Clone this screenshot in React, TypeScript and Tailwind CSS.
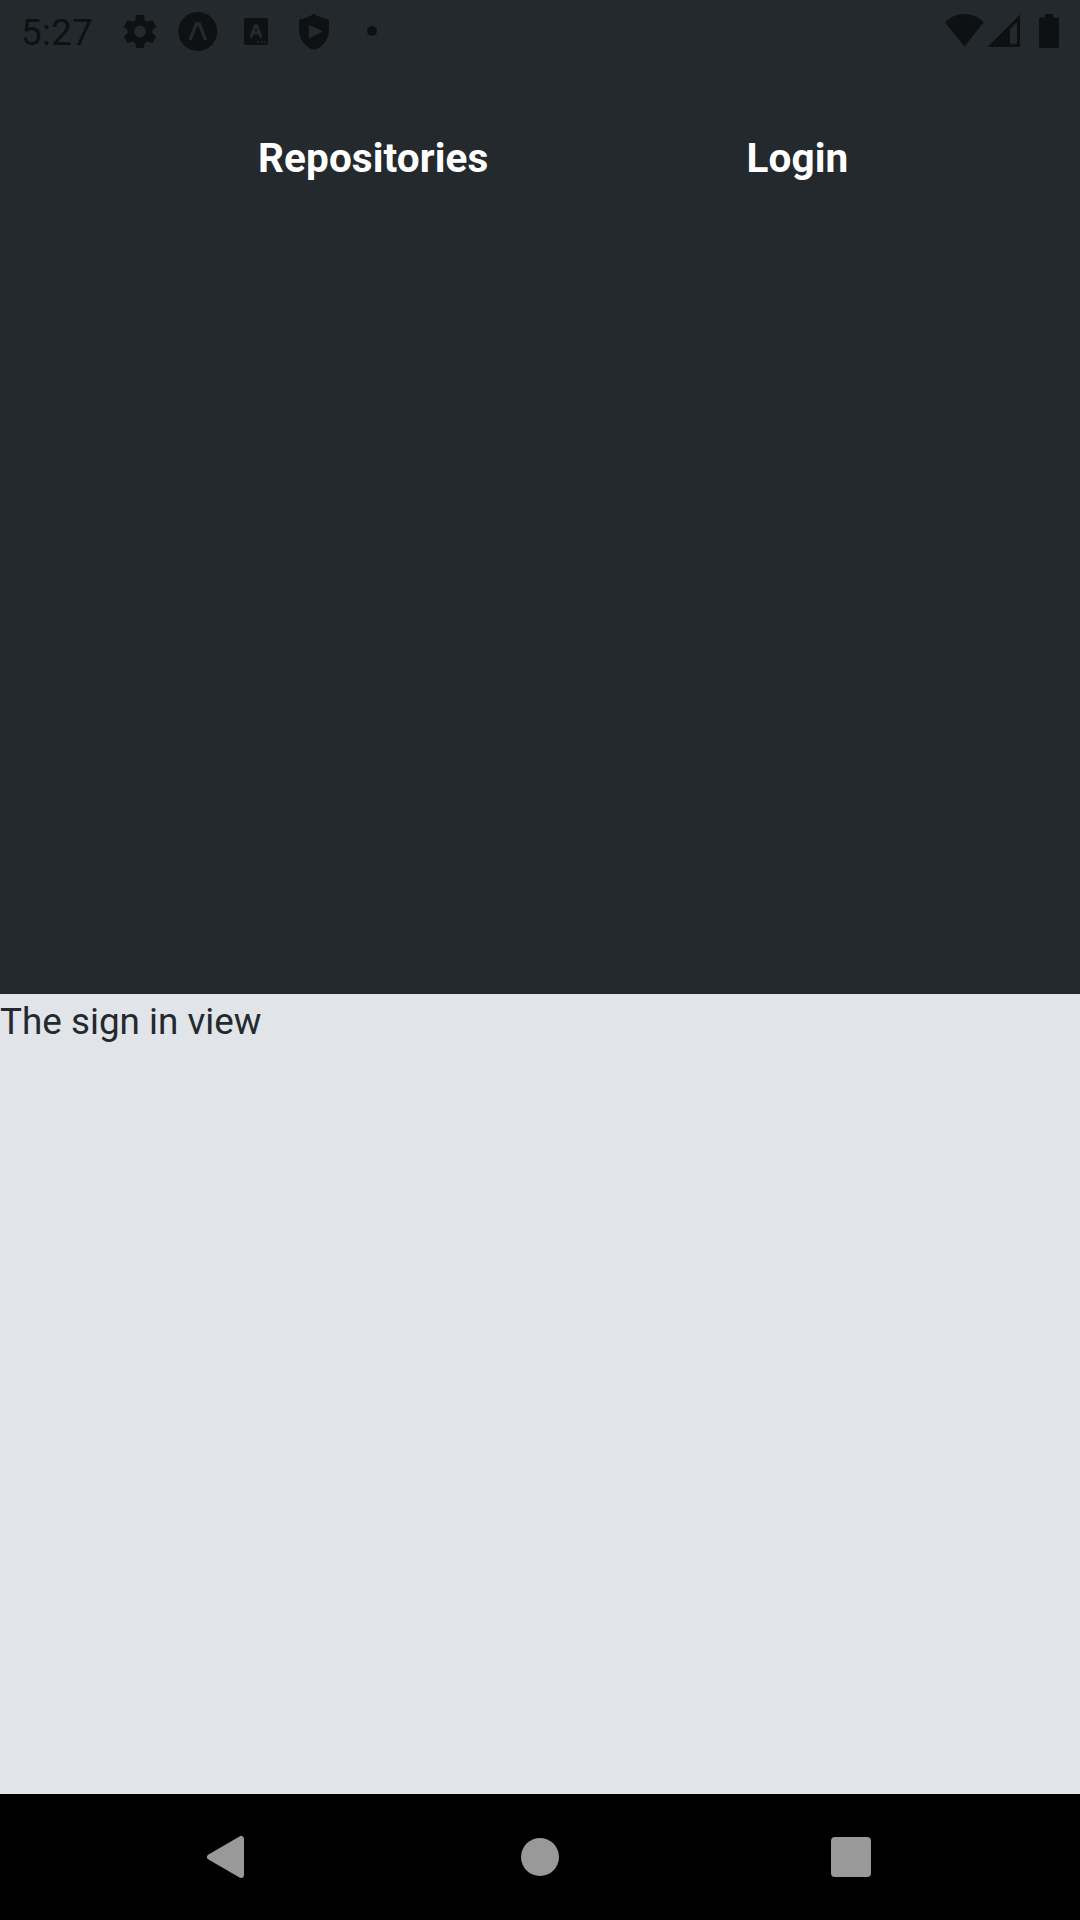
import type { ReactNode } from "react";

function Glyph({ box, className, children }: { box: string; className: string; children: ReactNode }) {
  return (
    <svg viewBox={box} className={`block shrink-0 ${className}`} fill="currentColor" aria-hidden="true">
      {children}
    </svg>
  );
}

function StatusBar() {
  return (
    <header className="flex h-[63px] shrink-0 items-center justify-between text-[#0e1011]">
      <div className="flex items-center">
        <span className="w-[111px] pt-[1px] pl-[21px] text-[36.75px] leading-[43px] tracking-[0.3px]">5:27</span>
        <Glyph box="0 0 58 63" className="h-[63px] w-[58px]">
          <path
            transform="translate(9.2 11.8) scale(1.65)"
            d="M19.43 12.98c.04-.32.07-.64.07-.98s-.03-.66-.07-.98l2.11-1.65c.19-.15.24-.42.12-.64l-2-3.46c-.12-.22-.39-.3-.61-.22l-2.49 1c-.52-.4-1.08-.73-1.69-.98l-.38-2.65C14.46 2.18 14.25 2 14 2h-4c-.25 0-.46.18-.49.42l-.38 2.65c-.61.25-1.17.59-1.69.98l-2.49-1c-.23-.09-.49 0-.61.22l-2 3.46c-.13.22-.07.49.12.64l2.11 1.65c-.04.32-.07.65-.07.98s.03.66.07.98l-2.11 1.65c-.19.15-.24.42-.12.64l2 3.46c.12.22.39.3.61.22l2.49-1c.52.4 1.08.73 1.69.98l.38 2.65c.03.24.24.42.49.42h4c.25 0 .46-.18.49-.42l.38-2.65c.61-.25 1.17-.59 1.69-.98l2.49 1c.23.09.49 0 .61-.22l2-3.46c.12-.22.07-.49-.12-.64l-2.11-1.65zM12 15.5c-1.93 0-3.5-1.57-3.5-3.5s1.57-3.5 3.5-3.5 3.5 1.57 3.5 3.5-1.57 3.5-3.5 3.5z"
          />
        </Glyph>
        <Glyph box="0 0 58 63" className="h-[63px] w-[58px]">
          <circle cx="28.8" cy="31.5" r="19.5" />
          <path d="M21 39.8L27.3 24H30.3L36.6 39.8" fill="none" stroke="#24292d" strokeWidth="3.4" />
        </Glyph>
        <Glyph box="0 0 58 63" className="h-[63px] w-[58px]">
          <rect x="17" y="18" width="24" height="27" rx="2" />
          <path
            d="M24.3 36.4L28.2 25.8H29.8L33.7 36.4M26 33H32"
            fill="none"
            stroke="#24292d"
            strokeWidth="2.9"
            strokeLinecap="round"
            strokeLinejoin="round"
          />
          <g fill="#24292d" opacity="0.75">
            <circle cx="30.8" cy="42" r="1.2" />
            <circle cx="34.5" cy="42" r="1.2" />
            <circle cx="38.2" cy="42" r="1.2" />
          </g>
        </Glyph>
        <Glyph box="0 0 58 63" className="h-[63px] w-[58px]">
          <path d="M29 13.8C33.2 16.5 38 18.6 42.5 19.3Q43.9 19.6 43.9 21V30C43.9 40 37 47.7 29 49.7C21 47.7 14.1 40 14.1 30V21Q14.1 19.6 15.5 19.3C20 18.6 24.8 16.5 29 13.8Z" />
          <path d="M24.4 25.8L36.4 31.5L24.4 37.5Z" fill="#24292d" stroke="#24292d" strokeWidth="1.4" strokeLinejoin="round" />
        </Glyph>
        <Glyph box="0 0 58 63" className="h-[63px] w-[58px]">
          <circle cx="29" cy="31" r="5" />
        </Glyph>
      </div>
      <div className="flex items-center">
        <Glyph box="0 0 42 63" className="h-[63px] w-[42px]">
          <path d="M1 22.3C12.3 11.2 28.5 11.2 39.8 22.3L20.5 46.5Z" />
        </Glyph>
        <Glyph box="0 0 36 63" className="h-[63px] w-[36px]">
          <path fillRule="evenodd" d="M1.5 47L34 14.5V47ZM31 22L24 29V43.7H31Z" />
        </Glyph>
        <Glyph box="0 0 58 63" className="h-[63px] w-[58px]">
          <path d="M23 14H31V17.5H35Q37 17.5 37 19.5V46Q37 48 35 48H19Q17 48 17 46V19.5Q17 17.5 19 17.5H23Z" />
        </Glyph>
      </div>
    </header>
  );
}

function NavigationBar() {
  return (
    <footer className="flex h-[126px] shrink-0 items-center justify-between bg-black pr-[209px] pl-[206px] text-[#999999]">
      <Glyph box="0 0 40 44" className="h-11 w-10">
        <path d="M4 22L35 4V40Z" stroke="currentColor" strokeWidth="6" strokeLinejoin="round" />
      </Glyph>
      <div className="ml-[3px] size-[38px] rounded-full bg-[#999999]" />
      <div className="size-10 rounded-[4px] bg-[#999999]" />
    </footer>
  );
}

export default function App() {
  return (
    <div className="flex h-[1920px] w-[1080px] flex-col overflow-hidden bg-[#24292d] font-['Roboto',sans-serif]">
      <StatusBar />
      <nav className="flex h-[931px] shrink-0 items-start gap-[258px] pt-[71px] pl-[258px] text-[40.5px] leading-[49px] font-bold tracking-[0.1px] text-white">
        <a>Repositories</a>
        <a>Login</a>
      </nav>
      <main className="flex-1 bg-[#e1e4e8] pt-[6px] text-[36.85px] leading-[43px] text-[#24292e]">
        The sign in view
      </main>
      <NavigationBar />
    </div>
  );
}
